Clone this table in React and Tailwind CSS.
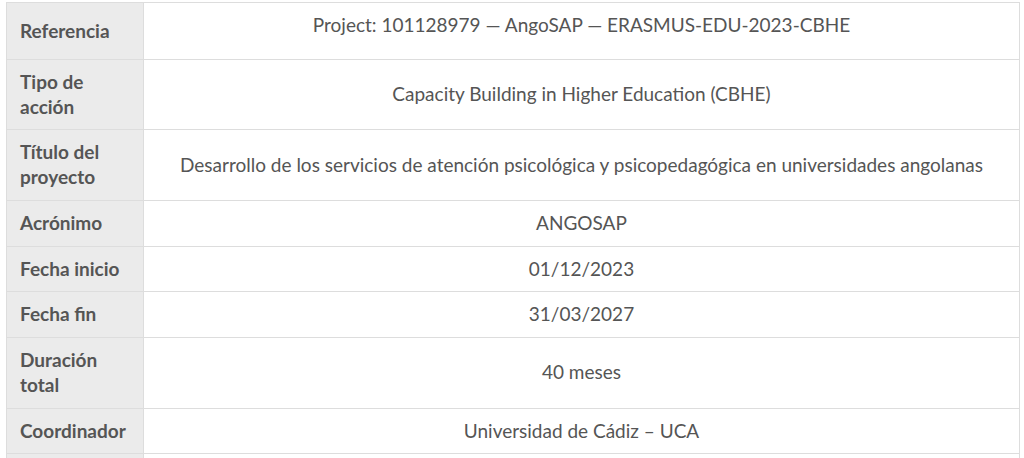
import React from "react";

const rows = [
  ["Referencia", "Project: 101128979 — AngoSAP — ERASMUS-EDU-2023-CBHE", true],
  ["Tipo de acción", "Capacity Building in Higher Education (CBHE)"],
  ["Título del proyecto", "Desarrollo de los servicios de atención psicológica y psicopedagógica en universidades angolanas"],
  ["Acrónimo", "ANGOSAP"],
  ["Fecha inicio", "01/12/2023"],
  ["Fecha fin", "31/03/2027"],
  ["Duración total", "40 meses"],
  ["Coordinador", "Universidad de Cádiz – UCA"],
  ["", ""],
];

export default function App() {
  return (
    <div className="w-[1024px] h-[458px] overflow-hidden bg-white pt-[2px] pl-[6px]" style={{ fontFamily: "Lato, 'Open Sans', sans-serif" }}>
      <table className="w-[1014px] border-collapse text-[19px] leading-[24.75px] text-[#555555]">
        <tbody>
          {rows.map(([label, value, first], i) => (
            <tr key={i}>
              <th className="w-[137px] border border-[#dddddd] bg-[#ebebeb] pl-[13px] pr-[8px] py-[10px] text-left align-middle font-bold">
                {label}
              </th>
              {first ? (
                <td className="border border-[#dddddd] px-[10px] pt-[10px] pb-[21px] text-center align-top">
                  {value}
                </td>
              ) : (
                <td className="border border-[#dddddd] px-[10px] py-[10px] text-center align-middle">
                  {value}
                </td>
              )}
            </tr>
          ))}
        </tbody>
      </table>
    </div>
  );
}
